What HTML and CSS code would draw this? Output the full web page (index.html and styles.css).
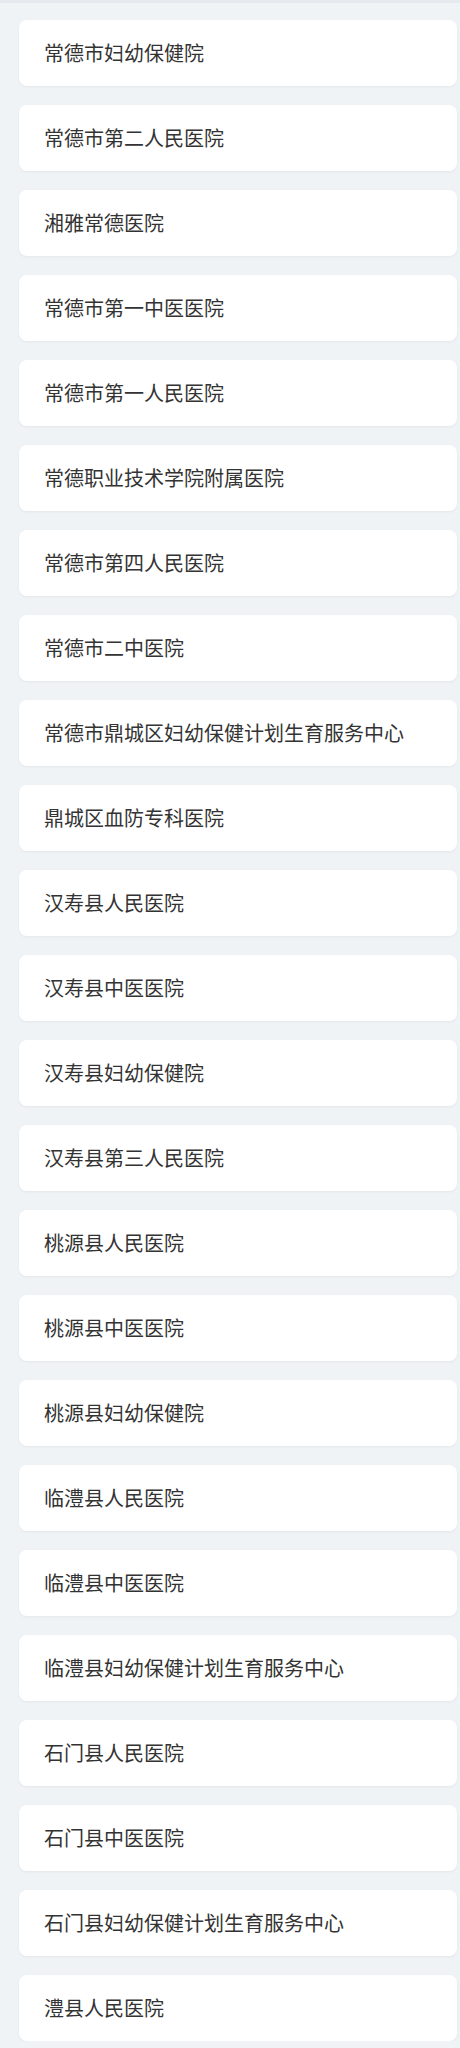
FILE: index.html
```html
<!DOCTYPE html>
<html lang="zh-CN">
<head>
<meta charset="utf-8">
<title>医院列表</title>
<link rel="stylesheet" href="styles.css">
</head>
<body>
<div class="topbar"></div>
<ul class="list">
<li class="card">常德市妇幼保健院</li>
<li class="card">常德市第二人民医院</li>
<li class="card">湘雅常德医院</li>
<li class="card">常德市第一中医医院</li>
<li class="card">常德市第一人民医院</li>
<li class="card">常德职业技术学院附属医院</li>
<li class="card">常德市第四人民医院</li>
<li class="card">常德市二中医院</li>
<li class="card">常德市鼎城区妇幼保健计划生育服务中心</li>
<li class="card">鼎城区血防专科医院</li>
<li class="card">汉寿县人民医院</li>
<li class="card">汉寿县中医医院</li>
<li class="card">汉寿县妇幼保健院</li>
<li class="card">汉寿县第三人民医院</li>
<li class="card">桃源县人民医院</li>
<li class="card">桃源县中医医院</li>
<li class="card">桃源县妇幼保健院</li>
<li class="card">临澧县人民医院</li>
<li class="card">临澧县中医医院</li>
<li class="card">临澧县妇幼保健计划生育服务中心</li>
<li class="card">石门县人民医院</li>
<li class="card">石门县中医医院</li>
<li class="card">石门县妇幼保健计划生育服务中心</li>
<li class="card">澧县人民医院</li>
</ul>
</body>
</html>
```
FILE: styles.css
```css
html, body {
  margin: 0;
  padding: 0;
  background: #f0f3f6;
}
body {
  font-family: "Noto Sans CJK SC", "Noto Sans", sans-serif;
  color: #333333;
}
.topbar {
  height: 3px;
  background: #e6eaee;
}
.list {
  list-style: none;
  margin: 0;
  padding: 17px 3px 0 19px;
  display: flex;
  flex-direction: column;
  gap: 19px;
}
.card {
  height: 66px;
  box-sizing: border-box;
  background: #ffffff;
  border-radius: 8px;
  box-shadow: 0 1px 3px rgba(0, 0, 0, 0.05);
  display: flex;
  align-items: center;
  padding-left: 25px;
  font-size: 20px;
  line-height: 1;
}
```
